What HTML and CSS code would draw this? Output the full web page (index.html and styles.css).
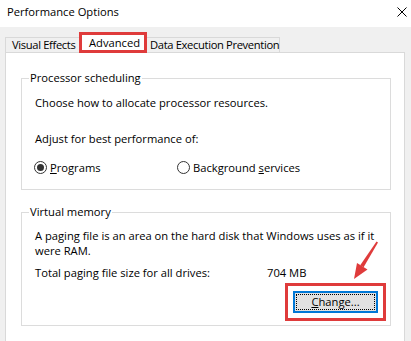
FILE: index.html
```html
<!DOCTYPE html>
<html lang="en">
<head>
    <meta charset="UTF-8">
    <meta name="viewport" content="width=device-width, initial-scale=1.0">
    <title>Performance Options</title>
    <link rel="stylesheet" href="styles.css">
</head>
<body>

    <div class="window">
        <div class="titlebar">
            <span class="title">Performance Options</span>
            <svg class="close" width="10" height="10" viewBox="0 0 10 10">
                <path d="M0.5 0.5 L9.5 9.5 M9.5 0.5 L0.5 9.5" stroke="#000" stroke-width="1" fill="none"/>
            </svg>
        </div>

        <div class="body">
            <!-- Tabs -->
            <div class="tabs">
                <div class="tab tab-visual">Visual Effects</div>
                <div class="tab tab-active">Advanced</div>
                <div class="tab tab-dep">Data Execution Prevention</div>
            </div>

            <div class="panel">
                <fieldset class="group">
                    <legend>Processor scheduling</legend>
                    <div class="group-body">
                        <p>Choose how to allocate processor resources.</p>
                        <p class="adjust">Adjust for best performance of:</p>
                        <div class="radios">
                            <label class="radio radio-first"><span class="dot checked"></span><u>P</u>rograms</label>
                            <label class="radio"><span class="dot"></span>Background&nbsp;<u>s</u>ervices</label>
                        </div>
                    </div>
                </fieldset>

                <fieldset class="group group-vm">
                    <legend>Virtual memory</legend>
                    <div class="group-body group-body-vm">
                        <p>A paging file is an area on the hard disk that Windows uses as if it<br>were RAM.</p>
                        <div class="total">
                            <span class="total-label">Total paging file size for all drives:</span>
                            <span>704 MB</span>
                        </div>
                        <div class="actions">
                            <button class="change"><span class="change-focus"><u>C</u>hange...</span></button>
                        </div>
                    </div>
                </fieldset>
            </div>
        </div>

        <!-- red arrow pointing at the Change button -->
        <svg class="arrow" width="411" height="341" viewBox="0 0 411 341">
            <polygon points="376.5,241.5 378,242.5 363.6,267.2 360.2,265.2" fill="#df3b3b"/>
            <polygon points="354,279 357,263 367.5,269.5" fill="#df3b3b"/>
        </svg>
    </div>

</body>
</html>
```

FILE: styles.css
```css
* {
    box-sizing: border-box;
}

body {
    margin: 0;
    font-family: "Open Sans", "Noto Sans", sans-serif;
    font-size: 11.2px;
    color: #000;
    background-color: #fff;
}

.window {
    position: relative;
    width: 411px;
    height: 341px;
    overflow: hidden;
    background-color: #f0f0f0;
}

.titlebar {
    height: 27px;
    display: flex;
    justify-content: space-between;
    align-items: flex-start;
    background-color: #fff;
}

.title {
    line-height: 24px;
    padding-left: 7px;
}

.close {
    margin: 7px 4px 0 0;
}

.body {
    padding: 8px 3px 0 5px;
}

/* tab strip */
.tabs {
    display: flex;
    align-items: flex-start;
}

.tab {
    margin-top: 2px;
    height: 15px;
    line-height: 14px;
    letter-spacing: -0.35px;
    border: 1px solid #d9d9d9;
    border-bottom: none;
    background-color: #f0f0f0;
    white-space: nowrap;
}

.tab-visual {
    width: 77px;
    padding-left: 6px;
}

.tab-active {
    position: relative;
    z-index: 1;
    margin-top: 0;
    width: 62px;
    padding-left: 7px;
    line-height: 15px;
    letter-spacing: 0;
    border: none;
    background-color: #fff;
    outline: 3px solid #df3b3b;
}

.tab-dep {
    width: 136px;
    padding-left: 5px;
}

.panel {
    height: 300px;
    margin-right: 3px;
    padding: 17px 13px 0 15px;
    border: 1px solid #d9d9d9;
    background-color: #fff;
}

/* group boxes */
.group {
    margin: 0;
    padding: 0;
    min-width: 0;
    border: 1px solid #dcdcdc;
}

.group legend {
    margin-left: 7px;
    padding: 0 1px;
    line-height: 16px;
}

.group-vm {
    margin-top: 14px;
}

.group-body {
    padding: 9px 13px 14px 13px;
}

.group-body-vm {
    padding-top: 8px;
    padding-bottom: 12px;
}

p {
    margin: 0;
    line-height: 15px;
}

.adjust {
    margin-top: 21px;
}

.radios {
    display: flex;
    margin-top: 14px;
    margin-left: -1px;
}

.radio {
    display: flex;
    align-items: center;
    line-height: 15px;
}

.radio-first {
    width: 143px;
}

.dot {
    width: 13px;
    height: 13px;
    margin-right: 3px;
    display: flex;
    align-items: center;
    justify-content: center;
    border: 1px solid #333;
    border-radius: 50%;
    background-color: #fff;
}

.dot.checked::after {
    content: "";
    width: 7px;
    height: 7px;
    border-radius: 50%;
    background-color: #333;
}

.total {
    display: flex;
    margin-top: 7px;
    line-height: 15px;
}

.total-label {
    width: 232px;
}

.actions {
    display: flex;
    justify-content: flex-end;
    margin-top: 11px;
    margin-right: -1px;
}

.change {
    width: 85px;
    height: 22px;
    padding: 2px;
    font: inherit;
    color: #000;
    border: 1px solid #0078d7;
    box-shadow: inset 0 0 0 1px #0078d7;
    background-color: #e1e1e1;
    outline: 3px solid #df3b3b;
    outline-offset: 5px;
}

.change-focus {
    display: block;
    height: 100%;
    line-height: 14px;
    border: 1px dotted #000;
}

.arrow {
    position: absolute;
    top: 0;
    left: 0;
    pointer-events: none;
}
```
